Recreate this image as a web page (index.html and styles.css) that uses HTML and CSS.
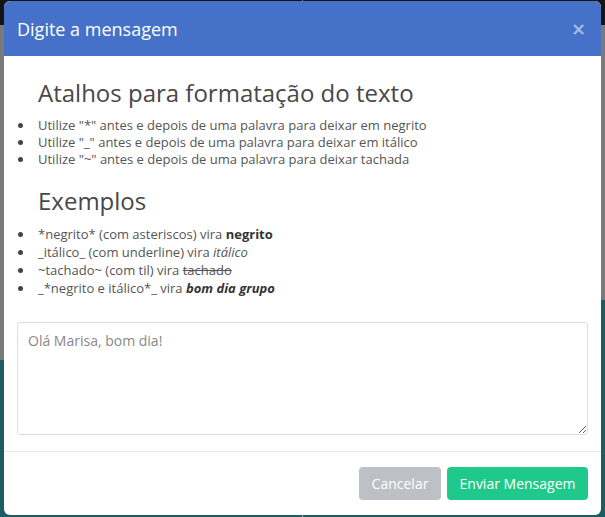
FILE: index.html
```html
<!DOCTYPE html>
<html lang="pt">
<head>
<meta charset="utf-8">
<title>Digite a mensagem</title>
<link rel="stylesheet" href="styles.css">
</head>
<body>
<div class="modal">
  <div class="modal-header">
    <h4 class="modal-title">Digite a mensagem</h4>
    <span class="close">&times;</span>
  </div>
  <div class="modal-body">
    <h3 class="section-title">Atalhos para formatação do texto</h3>
    <ul class="list">
      <li>Utilize "*" antes e depois de uma palavra para deixar em negrito</li>
      <li>Utilize "_" antes e depois de uma palavra para deixar em itálico</li>
      <li>Utilize "~" antes e depois de uma palavra para deixar tachada</li>
    </ul>
    <h3 class="section-title second">Exemplos</h3>
    <ul class="list examples">
      <li>*negrito* (com asteriscos) vira <b>negrito</b></li>
      <li>_itálico_ (com underline) vira <i>itálico</i></li>
      <li>~tachado~ (com til) vira <s>tachado</s></li>
      <li>_*negrito e itálico*_ vira <b><i>bom dia grupo</i></b></li>
    </ul>
    <textarea class="message">Olá Marisa, bom dia!</textarea>
  </div>
  <div class="modal-footer">
    <button class="btn btn-cancel">Cancelar</button>
    <button class="btn btn-send">Enviar Mensagem</button>
  </div>
</div>
</body>
</html>
```

FILE: styles.css
```css
html, body {
  margin: 0;
  padding: 0;
  height: 517px;
  overflow: hidden;
}
body {
  font-family: "Open Sans", "Noto Sans", sans-serif;
  background:
    linear-gradient(to bottom, #141414 0 25px, #7a7a7a 25px 360px, #1c5d65 360px) left top / 50% 100% no-repeat,
    linear-gradient(to bottom, #141414 0 25px, #7a7a7a 25px 300px, #1c5d65 300px) right top / 50% 100% no-repeat;
  padding-top: 1px;
  box-sizing: border-box;
}
.modal {
  margin: 0 4px 0 4px;
  height: 514px;
  background: #fff;
  border-radius: 6px;
  overflow: hidden;
  display: flex;
  flex-direction: column;
}
.modal-header {
  height: 55px;
  background: #4571c8;
  display: flex;
  align-items: center;
  justify-content: space-between;
  padding: 0 15px 0 13px;
  flex: none;
}
.modal-title {
  margin: 0;
  font-size: 18px;
  font-weight: 400;
  color: #fff;
  line-height: 24px;
}
.close {
  color: #a6bbe8;
  font-size: 18px;
  font-weight: 700;
  line-height: 20px;
  font-family: "DejaVu Sans", sans-serif;
}
.modal-body {
  padding: 0 13px;
  flex: 1;
  display: flex;
  flex-direction: column;
}
.section-title {
  margin: 24px 0 11px 21px;
  font-size: 24px;
  font-weight: 400;
  color: #484848;
  line-height: 26px;
}
.section-title.second {
  margin-top: 20px;
}
.list {
  list-style: none;
  margin: 0;
  padding: 0 0 0 21px;
  font-size: 13px;
  color: #555;
  line-height: 17px;
}
.list li::before {
  content: "";
  display: inline-block;
  width: 5px;
  height: 5px;
  border-radius: 50%;
  background: #444;
  margin-left: -20px;
  margin-right: 15px;
  vertical-align: 2px;
}
.examples {
  line-height: 18px;
}
.examples b {
  color: #333;
}
.examples s {
  color: #555;
}
.message {
  margin-top: 25px;
  height: 113px;
  box-sizing: border-box;
  border: 1px solid #ddd;
  border-radius: 3px;
  padding: 8px 10px;
  font-family: "Open Sans", "Noto Sans", sans-serif;
  font-size: 14px;
  line-height: 20px;
  color: #888;
  resize: vertical;
  outline: none;
}
.modal-footer {
  border-top: 1px solid #e5e5e5;
  padding: 15px 13px 15px 13px;
  display: flex;
  justify-content: flex-end;
  gap: 6px;
  flex: none;
}
.btn {
  height: 33px;
  border: none;
  border-radius: 4px;
  color: #fff;
  font-family: "Open Sans", "Noto Sans", sans-serif;
  font-size: 14px;
  padding: 0 12px;
}
.btn-cancel {
  background: #bdc1c5;
  width: 82px;
}
.btn-send {
  background: #1fc98b;
  width: 141px;
}
```
